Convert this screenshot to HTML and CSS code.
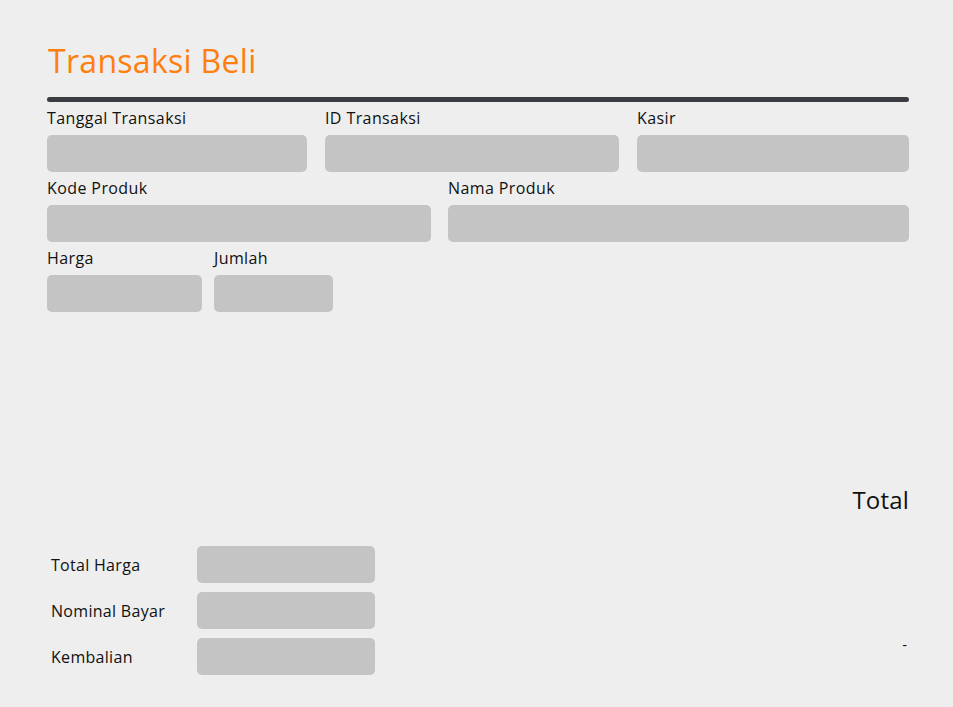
FILE: index.html
```html
<!DOCTYPE html>
<html lang="id">
<head>
<meta charset="utf-8">
<title>Transaksi Beli</title>
<link rel="stylesheet" href="styles.css">
</head>
<body>
<div class="page">
  <h1 class="title">Transaksi Beli</h1>
  <div class="divider"></div>

  <div class="row row-1">
    <div class="field"><label class="label">Tanggal Transaksi</label><div class="input"></div></div>
    <div class="field"><label class="label">ID Transaksi</label><div class="input"></div></div>
    <div class="field"><label class="label">Kasir</label><div class="input"></div></div>
  </div>
  <div class="row row-2">
    <div class="field"><label class="label">Kode Produk</label><div class="input"></div></div>
    <div class="field"><label class="label">Nama Produk</label><div class="input"></div></div>
  </div>
  <div class="row row-3">
    <div class="field"><label class="label">Harga</label><div class="input"></div></div>
    <div class="field"><label class="label">Jumlah</label><div class="input"></div></div>
  </div>

  <h2 class="total-heading">Total</h2>

  <div class="summary">
    <div class="summary-table">
      <span class="summary-label">Total Harga</span><div class="input"></div>
      <span class="summary-label">Nominal Bayar</span><div class="input"></div>
      <span class="summary-label">Kembalian</span><div class="input"></div>
    </div>
    <div class="summary-side"><span class="dash">-</span></div>
  </div>
</div>
</body>
</html>
```
FILE: styles.css
```css
* { box-sizing: border-box; }
html, body { margin: 0; padding: 0; }
body {
  background: #eeeeee;
  font-family: "Open Sans", "Noto Sans", sans-serif;
  color: #111111;
}
.page {
  padding: 41px 44px 0 47px;
}
.title {
  margin: 0 0 0 1px;
  font-size: 32px;
  line-height: 40px;
  font-weight: 400;
  color: #ff7f0e;
  letter-spacing: 0.3px;
}
.divider {
  margin-top: 16px;
  height: 5px;
  border-radius: 3px;
  background: #3b3c41;
}
.row {
  display: grid;
  margin-top: 5px;
}
.divider + .row { margin-top: 5px; }
.row-1 {
  grid-template-columns: 260px 294px 272px;
  justify-content: space-between;
}
.row-2 {
  grid-template-columns: 384px 1fr;
  column-gap: 17px;
}
.row-3 {
  grid-template-columns: 155px 119px;
  column-gap: 12px;
}
.field {
  display: flex;
  flex-direction: column;
  gap: 7px;
}
.label {
  display: block;
  padding-top: 1px;
  font-size: 16px;
  line-height: 20px;
  font-weight: 400;
  letter-spacing: 0.4px;
}
.input {
  height: 37px;
  background: #c4c4c4;
  border-radius: 5px;
}
.total-heading {
  margin: 172px 0 0 0;
  text-align: right;
  font-size: 24px;
  line-height: 32px;
  font-weight: 400;
  letter-spacing: 0.2px;
}
.summary {
  display: flex;
  margin-top: 30px;
}
.summary-table {
  display: grid;
  grid-template-columns: 150px 178px;
  row-gap: 9px;
  align-items: center;
}
.summary-label {
  padding-left: 4px;
  font-size: 16px;
  line-height: 20px;
  font-weight: 400;
  letter-spacing: 0.3px;
}
.summary-side {
  flex: 1;
  display: flex;
  justify-content: flex-end;
  padding-top: 88px;
}
.dash {
  font-size: 15px;
  line-height: 20px;
  padding-right: 2px;
}
```
